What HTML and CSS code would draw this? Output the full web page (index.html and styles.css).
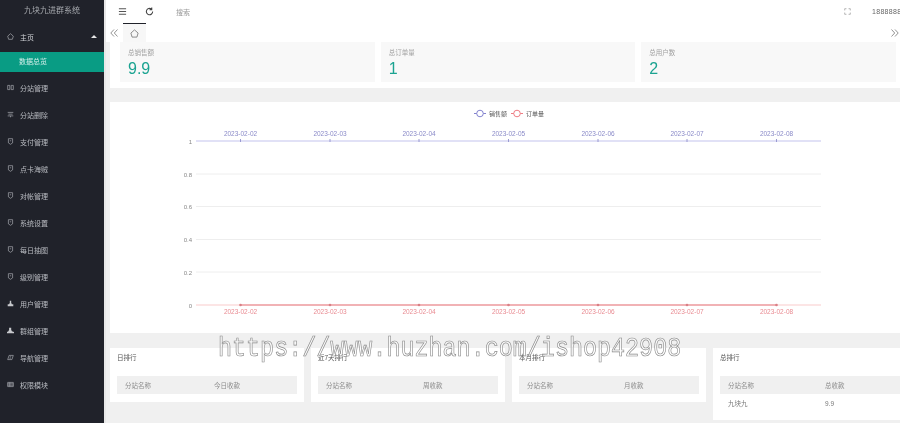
FILE: index.html
```html
<!DOCTYPE html>
<html lang="zh">
<head>
<meta charset="utf-8">
<title>九块九进群系统</title>
<link rel="stylesheet" href="styles.css">
</head>
<body>
<div class="app">
  <aside class="side">
    <div class="brand">九块九进群系统</div>
    <div class="nav-item home"><svg class="ico" viewBox="0 0 10 10"><path d="M5 1 9 4.500 7.700 9H2.300L1 4.500Z"/></svg><span>主页</span><i class="caret"></i></div>
    <div class="nav-sub">数据总览</div>
    <nav class="nav">
      <div class="nav-item"><svg class="ico" viewBox="0 0 10 10"><path d="M1 2h3v6H1zM6 2h3v6H6z"/></svg><span>分站管理</span></div>
      <div class="nav-item"><svg class="ico" viewBox="0 0 10 10"><path d="M1 2h8M2 4.500h6M1 7h8M5 7v2"/></svg><span>分站删除</span></div>
      <div class="nav-item"><svg class="ico" viewBox="0 0 10 10"><path d="M2 1h6v6L5 9 2 7ZM4 4h2"/></svg><span>支付管理</span></div>
      <div class="nav-item"><svg class="ico" viewBox="0 0 10 10"><path d="M2 1h6v6L5 9 2 7ZM4 4h2"/></svg><span>点卡海贼</span></div>
      <div class="nav-item"><svg class="ico" viewBox="0 0 10 10"><path d="M2 1h6v6L5 9 2 7ZM4 4h2"/></svg><span>对帐管理</span></div>
      <div class="nav-item"><svg class="ico" viewBox="0 0 10 10"><path d="M2 1h6v6L5 9 2 7ZM4 4h2"/></svg><span>系统设置</span></div>
      <div class="nav-item"><svg class="ico" viewBox="0 0 10 10"><path d="M2 1h6v6L5 9 2 7ZM4 4h2"/></svg><span>每日抽图</span></div>
      <div class="nav-item"><svg class="ico" viewBox="0 0 10 10"><path d="M2 1h6v6L5 9 2 7ZM4 4h2"/></svg><span>级别管理</span></div>
      <div class="nav-item"><svg class="ico solid" viewBox="0 0 10 10"><path d="M4 1h2v3l1 2h2v3H1V6h2l1-2Z"/></svg><span>用户管理</span></div>
      <div class="nav-item"><svg class="ico solid" viewBox="0 0 10 10"><path d="M3 1h3v3l1 2 3 1v2H0V7l2-1 1-2Z"/></svg><span>群组管理</span></div>
      <div class="nav-item"><svg class="ico" viewBox="0 0 10 10"><path d="M1 8 3 2h6L7 8ZM4 4h2M3.500 6h2"/></svg><span>导航管理</span></div>
      <div class="nav-item"><svg class="ico" viewBox="0 0 10 10"><path d="M1 2h8v6H1zM1 4h8M1 6h8M4 2v6"/></svg><span>权限模块</span></div>
    </nav>
  </aside>
  <main class="main">
    <header class="top">
      <svg class="tico menu" viewBox="0 0 10 10"><path d="M1 2h8M1 5h8M1 8h8"/></svg>
      <svg class="tico refresh" viewBox="0 0 10 10"><path d="M8.500 5A3.500 3.500 0 1 1 7 2.200M7.500 .5V3H5"/></svg>
      <span class="search">搜索</span>
      <svg class="tico full" viewBox="0 0 10 10"><path d="M1 3.500V1h2.500M6.500 1H9v2.500M9 6.500V9H6.500M3.500 9H1V6.500"/></svg>
      <span class="user">18888888888</span>
    </header>
    <div class="tabs">
      <svg class="pager left" viewBox="0 0 8 8"><path d="M4 .5.800 4 4 7.500M7.500 .5 4.300 4l3.200 3.500"/></svg>
      <div class="tab"><svg class="tab-ico" viewBox="0 0 10 10"><path d="M5 1 9 4.500 7.700 9H2.300L1 4.500Z"/></svg></div>
      <svg class="pager right" viewBox="0 0 8 8"><path d="M4 .5 7.200 4 4 7.500M.5 .5 3.700 4 .5 7.500"/></svg>
    </div>
    <section class="stats">
      <div class="stat"><div class="stat-label">总销售额</div><div class="stat-value">9.9</div></div>
      <div class="stat"><div class="stat-label">总订单量</div><div class="stat-value">1</div></div>
      <div class="stat"><div class="stat-label">总用户数</div><div class="stat-value">2</div></div>
    </section>
    <section class="chart">
      <svg class="chart-svg" width="790" height="231" viewBox="110 102 790 231">
        <g class="legend">
          <path class="l-blue" d="M474 113.500h12"/><circle class="l-blue" cx="480" cy="113.500" r="3.300"/>
          <text x="489" y="116" class="lt">销售额</text>
          <path class="l-red" d="M511 113.500h12"/><circle class="l-red" cx="517" cy="113.500" r="3.300"/>
          <text x="526" y="116" class="lt">订单量</text>
        </g>
        <g class="grid">
          <path d="M196 174H821M196 206.500H821M196 239.500H821M196 272H821"/>
        </g>
        <g class="yl">
          <text x="192" y="143.500">1</text>
          <text x="192" y="176.500">0.8</text>
          <text x="192" y="209">0.6</text>
          <text x="192" y="242">0.4</text>
          <text x="192" y="274.500">0.2</text>
          <text x="192" y="307.500">0</text>
        </g>
        <path class="ax-blue" d="M196 141H821"/>
        <path class="ticks-blue" d="M240.500 139v3M330 139v3M419 139v3M508.500 139v3M598 139v3M687 139v3M776.500 139v3"/>
        <g class="xb">
          <text x="240.500" y="136">2023-02-02</text><text x="330" y="136">2023-02-03</text><text x="419" y="136">2023-02-04</text><text x="508.500" y="136">2023-02-05</text><text x="598" y="136">2023-02-06</text><text x="687" y="136">2023-02-07</text><text x="776.500" y="136">2023-02-08</text>
        </g>
        <path class="ax-pale" d="M196 305H821"/>
        <path class="ax-red" d="M240.500 305H776.500"/>
        <g class="dots">
          <circle cx="240.500" cy="305" r="1.300"/><circle cx="330" cy="305" r="1.300"/><circle cx="419" cy="305" r="1.300"/><circle cx="508.500" cy="305" r="1.300"/><circle cx="598" cy="305" r="1.300"/><circle cx="687" cy="305" r="1.300"/><circle cx="776.500" cy="305" r="1.300"/>
        </g>
        <g class="xr">
          <text x="240.500" y="314">2023-02-02</text><text x="330" y="314">2023-02-03</text><text x="419" y="314">2023-02-04</text><text x="508.500" y="314">2023-02-05</text><text x="598" y="314">2023-02-06</text><text x="687" y="314">2023-02-07</text><text x="776.500" y="314">2023-02-08</text>
        </g>
      </svg>
    </section>
    <section class="ranks">
      <div class="rank">
        <div class="rank-title">日排行</div>
        <div class="rank-head first"><span>分站名称</span><span>今日收款</span></div>
      </div>
      <div class="rank">
        <div class="rank-title">近7天排行</div>
        <div class="rank-head"><span>分站名称</span><span>周收款</span></div>
      </div>
      <div class="rank">
        <div class="rank-title">本月排行</div>
        <div class="rank-head"><span>分站名称</span><span>月收款</span></div>
      </div>
      <div class="rank">
        <div class="rank-title">总排行</div>
        <div class="rank-head"><span>分站名称</span><span>总收款</span></div>
        <div class="rank-row"><span>九块九</span><span>9.9</span></div>
      </div>
    </section>
  </main>
</div>
<div class="watermark">https://www.huzhan.com/ishop42908</div>
</body>
</html>
```
FILE: styles.css
```css
* { box-sizing: border-box; }
html, body { margin: 0; height: 423px; overflow: hidden; }
body { font-family: "Liberation Sans", "Noto Sans CJK SC", sans-serif; background: #f0f0f0; position: relative; }
.app { display: flex; width: 900px; height: 423px; filter: blur(.35px); }

.side { width: 104px; flex: none; background: #20222a; color: #b9bcc2; font-size: 7px; }
.brand { height: 23px; line-height: 22px; text-align: center; font-size: 8px; color: #a8abb0; }
.nav-item { display: flex; align-items: center; height: 27px; padding-left: 7px; gap: 6px; position: relative; }
.home { height: 29px; padding-bottom: 2px; color: #d0d2d6; }
.nav-sub { height: 20px; line-height: 20px; padding-left: 19px; background: #099c84; color: #d3efea; }
.nav { padding-top: 2px; }
.ico { width: 7px; height: 7px; fill: none; stroke: #a6a9af; stroke-width: 1; flex: none; }
.ico.solid { fill: #c6c8cc; stroke: none; }
.caret { position: absolute; right: 7px; top: 12px; border: 3px solid transparent; border-top: 0; border-bottom: 3px solid #e6e6e6; }

.main { flex: 1; min-width: 0; display: flex; flex-direction: column; background: #f0f0f0; border-left: 2px solid #e8e8e8; }
.top { height: 23px; flex: none; background: #fff; display: flex; align-items: center; padding-left: 12px; overflow: hidden; }
.tico { width: 9px; height: 9px; fill: none; stroke: #555; stroke-width: 1.200; flex: none; }
.refresh { margin-left: 18px; stroke: #444; }
.search { margin-left: 22px; font-size: 7px; color: #999; }
.full { margin-left: auto; margin-right: 1px; width: 7px; height: 7px; stroke: #999; stroke-width: 1; }
.user { margin-left: 20px; margin-right: -12px; font-size: 7px; letter-spacing: .3px; color: #666; white-space: nowrap; width: 40px; flex: none; }

.tabs { height: 19px; flex: none; background: #fff; display: flex; align-items: stretch; padding-left: 17px; position: relative; }
.tab { width: 23px; border-top: 1px solid #20222a; background: #f7f7f7; display: flex; align-items: center; justify-content: center; }
.tab-ico { width: 9px; height: 9px; fill: none; stroke: #666; stroke-width: .8; }
.pager { position: absolute; top: 6px; width: 8px; height: 8px; fill: none; stroke: #888; stroke-width: .9; }
.pager.left { left: 4px; }
.pager.right { right: 1px; }

.stats { height: 46px; flex: none; background: #fff; margin-left: 4px; padding: 0 4px 6px 10px; display: flex; gap: 6px; }
.stat { flex: 1; background: #f8f8f8; padding: 6px 8px 0; }
.stat-label { font-size: 6.500px; color: #a0a0a0; line-height: 9px; }
.stat-value { font-size: 16px; line-height: 20px; margin-top: 2px; color: #1ba391; }

.chart { height: 231px; flex: none; margin: 14px 0 0 4px; background: #fff; }
.chart-svg { display: block; font-family: "Liberation Sans", "Noto Sans CJK SC", sans-serif; }
.l-blue, .l-red { fill: #fff; stroke-width: 1; }
.l-blue { stroke: #8383cf; }
.l-red { stroke: #ee7d84; }
.lt { font-size: 6px; fill: #555; }
.grid path { stroke: #eeeeee; stroke-width: 1; fill: none; }
.yl text { font-size: 6px; fill: #888; text-anchor: end; }
.ax-blue { stroke: #c3c3ee; stroke-width: 1.200; fill: none; }
.ticks-blue { stroke: #9a9ad2; stroke-width: 1; fill: none; }
.xb text { font-size: 6.500px; fill: #8a8ac8; text-anchor: middle; }
.ax-pale { stroke: #fbdcdd; stroke-width: 1.500; fill: none; }
.ax-red { stroke: #eea0a4; stroke-width: 1.500; fill: none; }
.dots circle { fill: #d97f85; }
.xr text { font-size: 6.500px; fill: #e98b92; text-anchor: middle; }

.ranks { flex: none; margin: 15px 0 0 4px; display: flex; align-items: flex-start; gap: 7px; }
.rank { width: 194px; height: 54px; background: #fff; padding: 0 7px; flex: none; }
.rank:last-child { height: 72px; width: 187px; padding-right: 0; }
.rank-title { height: 20px; line-height: 20px; font-size: 6.500px; color: #555; }
.rank-head { height: 18px; margin-top: 8px; background: #f0f0f0; display: grid; grid-template-columns: 97px 1fr; align-items: center; padding-left: 8px; font-size: 6.500px; color: #8c8c8c; }
.rank-head.first { grid-template-columns: 89px 1fr; }
.rank-row { height: 18px; display: grid; grid-template-columns: 97px 1fr; align-items: center; padding-left: 8px; font-size: 6.500px; color: #777; }

.watermark { position: absolute; left: 218px; top: 334px; font-family: "Liberation Mono", monospace; font-size: 23.400px; line-height: 30px; color: rgba(255,255,255,.55); -webkit-text-stroke: .6px #8a8a8a; white-space: nowrap; transform: scaleY(1.2); will-change: transform; }
```
